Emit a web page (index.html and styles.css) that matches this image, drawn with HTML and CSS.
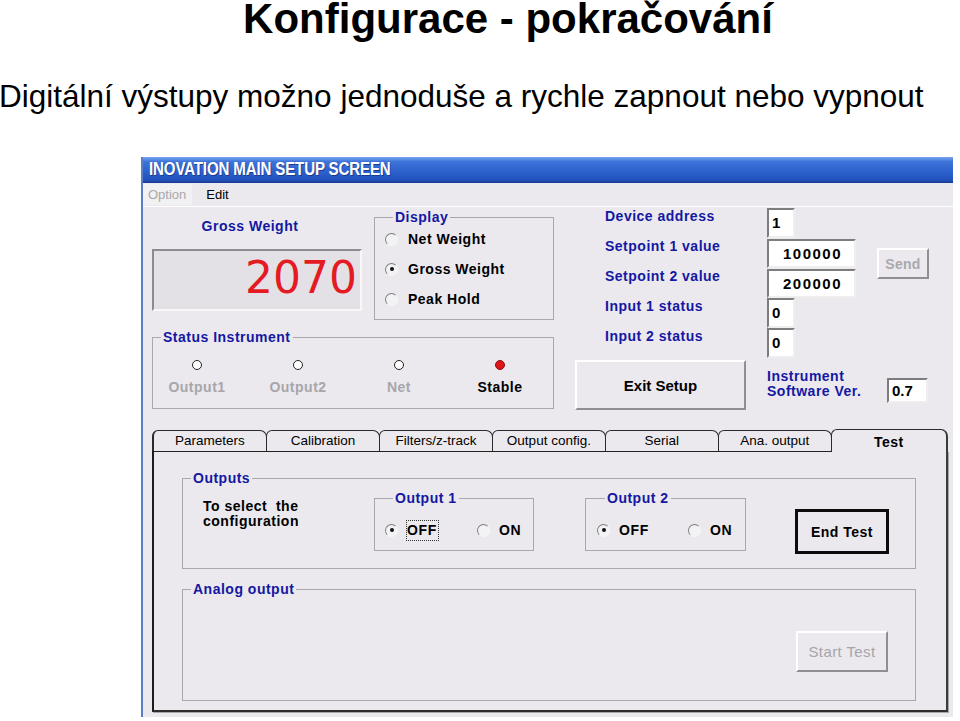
FILE: index.html
```html
<!DOCTYPE html>
<html lang="cs">
<head>
<meta charset="utf-8">
<title>Konfigurace - pokračování</title>
<link rel="stylesheet" href="styles.css">
</head>
<body>
<h1 class="slide-title">Konfigurace - pokračování</h1>
<p class="slide-text">Digitální výstupy možno jednoduše a rychle zapnout nebo vypnout</p>

<div class="window">
  <div class="titlebar"><span class="titlebar-text">INOVATION MAIN SETUP SCREEN</span></div>
  <div class="menubar">
    <span class="menu-item disabled">Option</span>
    <span class="menu-item">Edit</span>
  </div>
  <div class="client">
    <div class="top">
      <div class="top-left">
        <div class="weight-row">
          <div class="weight-col">
            <div class="lbl-blue weight-lbl">Gross Weight</div>
            <div class="weight-display">2070</div>
          </div>
          <fieldset class="group display-group">
            <legend>Display</legend>
            <div class="radio-row"><span class="radio"></span>Net Weight</div>
            <div class="radio-row"><span class="radio checked"></span>Gross Weight</div>
            <div class="radio-row"><span class="radio"></span>Peak Hold</div>
          </fieldset>
        </div>
        <fieldset class="group status-group">
          <legend>Status Instrument</legend>
          <div class="leds">
            <div class="led-item"><span class="led"></span><span class="led-lbl">Output1</span></div>
            <div class="led-item"><span class="led"></span><span class="led-lbl">Output2</span></div>
            <div class="led-item"><span class="led"></span><span class="led-lbl">Net</span></div>
            <div class="led-item"><span class="led on"></span><span class="led-lbl active">Stable</span></div>
          </div>
        </fieldset>
      </div>

      <div class="top-right">
        <div class="lbl-blue row-lbl r1">Device address</div>
        <div class="field short r1">1</div>
        <div class="lbl-blue row-lbl r2">Setpoint 1 value</div>
        <div class="field wide r2">100000</div>
        <div class="btn send-btn">Send</div>
        <div class="lbl-blue row-lbl r3">Setpoint 2 value</div>
        <div class="field wide r3">200000</div>
        <div class="lbl-blue row-lbl r4">Input 1 status</div>
        <div class="field short r4">0</div>
        <div class="lbl-blue row-lbl r5">Input 2 status</div>
        <div class="field short r5">0</div>
        <div class="btn exit-btn">Exit Setup</div>
        <div class="lbl-blue ver-lbl">Instrument<br>Software Ver.</div>
        <div class="field ver-field">0.7</div>
      </div>
    </div>

    <div class="tabs">
      <div class="tab">Parameters</div>
      <div class="tab">Calibration</div>
      <div class="tab">Filters/z-track</div>
      <div class="tab">Output config.</div>
      <div class="tab">Serial</div>
      <div class="tab">Ana. output</div>
      <div class="tab selected">Test</div>
    </div>
    <div class="tab-panel">
      <fieldset class="group outputs-group">
        <legend>Outputs</legend>
        <div class="outputs-row">
          <div class="hint">To select&nbsp; the<br>configuration</div>
          <fieldset class="group out-group out1">
            <legend>Output 1</legend>
            <div class="opt-row">
              <div class="opt first"><span class="radio checked"></span><span class="focus">OFF</span></div>
              <div class="opt"><span class="radio"></span><span>ON</span></div>
            </div>
          </fieldset>
          <fieldset class="group out-group out2">
            <legend>Output 2</legend>
            <div class="opt-row">
              <div class="opt first"><span class="radio checked"></span><span>OFF</span></div>
              <div class="opt"><span class="radio"></span><span>ON</span></div>
            </div>
          </fieldset>
          <div class="end-btn">End Test</div>
        </div>
      </fieldset>
      <fieldset class="group analog-group">
        <legend>Analog output</legend>
        <div class="analog-row">
          <div class="btn start-btn">Start Test</div>
        </div>
      </fieldset>
    </div>
  </div>
</div>
</body>
</html>
```

FILE: styles.css
```css
html, body {
  margin: 0;
  padding: 0;
  background: #ffffff;
}

body {
  font-family: "Liberation Sans", Arial, sans-serif;
  color: #000;
  width: 960px;
  height: 721px;
  overflow: hidden;
}

.slide-title {
  margin: 0;
  font-size: 42px;
  font-weight: bold;
  line-height: 37px;
  text-align: center;
  padding-left: 56px;
}

.slide-text {
  margin: 41px 0 0 -1px;
  font-size: 31.5px;
  line-height: 36px;
  white-space: nowrap;
}

/* ---------- window ---------- */
.window {
  margin: 43px 0 0 141px;
  width: 812px;
  background: #ebe9ee;
  border-left: 2px solid #5b7fc7;
  box-sizing: border-box;
}

.titlebar {
  height: 26px;
  background: linear-gradient(#79a6ef 0%, #3d73d9 18%, #2b5fcb 60%, #2352bd 88%, #173a8f 100%);
  padding-left: 6px;
  overflow: hidden;
}

.titlebar-text {
  display: inline-block;
  color: #fff;
  font-weight: bold;
  font-size: 18px;
  letter-spacing: -0.2px;
  line-height: 25px;
  white-space: nowrap;
  text-shadow: 1px 1px 0 #1b3b8c;
  transform: scaleX(0.84);
  transform-origin: left center;
}

.menubar {
  height: 24px;
  display: flex;
  align-items: center;
  font-size: 13px;
  border-bottom: 1px solid #ffffff;
  box-sizing: border-box;
}

.menu-item {
  padding: 3px 6px 3px 5px;
  margin-right: 9px;
}

.menu-item.disabled {
  color: #a9a9a9;
  background: #f1f0f3;
}

.client {
  padding: 0 0 5px 9px;
}

/* ---------- shared ---------- */
.lbl-blue {
  color: #1418a2;
  font-weight: bold;
  font-size: 14px;
  letter-spacing: 0.5px;
  line-height: 17px;
  white-space: nowrap;
}

.group {
  margin: 0;
  padding: 0;
  min-width: 0;
  border: 1px solid #a9a7ac;
  box-sizing: border-box;
}

.group legend {
  padding: 0 2px;
  margin-left: 8px;
  color: #1418a2;
  font-weight: bold;
  font-size: 14px;
  letter-spacing: 0.5px;
  line-height: 14px;
}

.radio {
  display: inline-block;
  width: 13px;
  height: 13px;
  box-sizing: border-box;
  border-radius: 50%;
  border: 1px solid;
  border-color: #7e7e7e #f6f6f6 #f6f6f6 #7e7e7e;
  background: #f3f2f5;
  position: relative;
  flex: none;
}

.radio.checked::after {
  content: "";
  position: absolute;
  left: 3.5px;
  top: 3.5px;
  width: 4px;
  height: 4px;
  border-radius: 50%;
  background: #111;
}

.btn {
  box-sizing: border-box;
  background: #ebe9ee;
  border: 2px solid;
  border-color: #ffffff #8f8e92 #8f8e92 #ffffff;
  display: flex;
  align-items: center;
  justify-content: center;
  font-weight: bold;
  font-size: 14px;
}

.field {
  box-sizing: border-box;
  background: #fff;
  border: 2px solid;
  border-color: #7d7d80 #eeeeee #eeeeee #7d7d80;
  font-weight: bold;
  font-size: 15px;
  line-height: 25px;
  padding-left: 3px;
}

/* ---------- top area ---------- */
.top {
  display: flex;
  gap: 21px;
}

.top-left {
  width: 402px;
  padding-top: 3px;
}

.weight-row {
  display: flex;
  gap: 12px;
  align-items: flex-start;
}

.weight-col {
  width: 210px;
  padding-top: 8px;
}

.weight-lbl {
  text-align: center;
  padding-right: 14px;
}

.weight-display {
  margin-top: 14px;
  height: 62px;
  box-sizing: border-box;
  border: 2px solid;
  border-color: #8c8b8f #f7f7f7 #f7f7f7 #8c8b8f;
  background: #e3e1e5;
  color: #e41b22;
  font-family: "DejaVu Sans", sans-serif;
  font-size: 44px;
  line-height: 54px;
  text-align: right;
  padding-right: 3px;
}

.display-group {
  width: 180px;
  padding: 0 0 5px 10px;
}

.radio-row {
  display: flex;
  align-items: center;
  gap: 10px;
  height: 30px;
  font-weight: bold;
  font-size: 14px;
  letter-spacing: 0.5px;
}

.status-group {
  width: 402px;
  margin-top: 10px;
}

.leds {
  display: flex;
  gap: 41px;
  padding: 16px 0 12px 14px;
}

.led-item {
  width: 60px;
  display: flex;
  flex-direction: column;
  align-items: center;
}

.led {
  width: 10px;
  height: 10px;
  box-sizing: border-box;
  border-radius: 50%;
  border: 1.5px solid #222;
  background: #fff;
}

.led.on {
  background: #e0141c;
  border-color: #8a1010;
}

.led-lbl {
  margin-top: 9px;
  font-weight: bold;
  font-size: 14px;
  letter-spacing: 0.5px;
  line-height: 17px;
  color: #a7a6aa;
}

.led-lbl.active {
  color: #000;
}

.top-right {
  width: 371px;
  padding-top: 1px;
  display: grid;
  grid-template-columns: 192px 110px 69px;
  grid-template-rows: repeat(5, 30px) 52px;
}

.row-lbl {
  grid-column: 1;
  padding-left: 30px;
}

.r1 { grid-row: 1; }
.r2 { grid-row: 2; }
.r3 { grid-row: 3; }
.r4 { grid-row: 4; }
.r5 { grid-row: 5; }

.field.short {
  grid-column: 2;
  width: 28px;
  height: 30px;
}

.field.wide {
  grid-column: 2;
  width: 89px;
  height: 29px;
  margin-top: 1px;
  text-align: center;
  padding-left: 2px;
  letter-spacing: 1.5px;
}

.send-btn {
  grid-column: 3;
  grid-row: 2 / span 2;
  width: 52px;
  height: 31px;
  margin-top: 10px;
  color: #a9a8ac;
  letter-spacing: 0.3px;
}

.exit-btn {
  grid-column: 1;
  grid-row: 6;
  width: 171px;
  height: 50px;
  margin-top: 2px;
  font-size: 15px;
}

.ver-lbl {
  grid-column: 2;
  grid-row: 6;
  margin-top: 11px;
  line-height: 15px;
}

.ver-field {
  grid-column: 3;
  grid-row: 6;
  width: 41px;
  height: 25px;
  margin: 20px 0 0 10px;
  line-height: 21px;
}

/* ---------- tabs ---------- */
.tabs {
  display: flex;
  width: 796px;
  height: 22px;
  margin-top: 19px;
  align-items: flex-end;
}

.tab {
  flex: 1;
  height: 21px;
  box-sizing: border-box;
  border: 1px solid #2a2a2a;
  border-bottom: none;
  border-radius: 6px 7px 0 0;
  margin-left: -1px;
  text-align: center;
  font-size: 13.5px;
  line-height: 20px;
  background: #ebe9ee;
}

.tab:first-child {
  margin-left: 0;
  border-left-width: 2px;
}

.tab.selected {
  height: 23px;
  margin-bottom: -1px;
  position: relative;
  z-index: 1;
  font-weight: bold;
  font-size: 14px;
  letter-spacing: 0.5px;
  line-height: 24px;
  border-right: 2px solid #3a3a3a;
  flex: 1.02;
}

.tab-panel {
  width: 796px;
  height: 261px;
  box-sizing: border-box;
  border-top: 1px solid #222;
  border-left: 2px solid #1c1c1c;
  border-right: 2px solid #3c3c3c;
  border-bottom: 2px solid #2e2e2e;
  box-shadow: 1px 1px 0 #a8a8a8;
  padding: 19px 0 0 28px;
}

.outputs-group {
  width: 734px;
}

.outputs-row {
  display: flex;
  align-items: flex-start;
  padding: 0 0 14px 20px;
}

.hint {
  width: 171px;
  margin-top: 14px;
  font-weight: bold;
  font-size: 14px;
  letter-spacing: 0.5px;
  line-height: 15px;
}

.out-group {
  margin-top: 6px;
}

.out1 {
  width: 160px;
  padding-left: 10px;
}

.out2 {
  width: 161px;
  margin-left: 51px;
  padding-left: 11px;
}

.opt-row {
  display: flex;
  align-items: center;
  height: 40px;
  padding-top: 5px;
  font-weight: bold;
  font-size: 14px;
  letter-spacing: 0.6px;
}

.opt {
  display: flex;
  align-items: center;
  gap: 9px;
}

.out1 .opt.first {
  width: 92px;
}

.out2 .opt.first {
  width: 91px;
}

.focus {
  outline: 1px dotted #333;
  outline-offset: 0;
  padding: 1px 1px 1px 0;
  line-height: 17px;
}

.end-btn {
  width: 94px;
  height: 45px;
  margin: 24px 0 0 49px;
  box-sizing: border-box;
  border: 3px solid #0c0c0c;
  display: flex;
  align-items: center;
  justify-content: center;
  font-weight: bold;
  font-size: 14px;
  letter-spacing: 0.5px;
}

.analog-group {
  width: 734px;
  margin-top: 13px;
}

.analog-row {
  display: flex;
  justify-content: flex-end;
  padding: 35px 27px 28px 0;
}

.start-btn {
  width: 92px;
  height: 41px;
  font-weight: normal;
  font-size: 15px;
  letter-spacing: 0.4px;
  color: #a6a5a9;
}
```
